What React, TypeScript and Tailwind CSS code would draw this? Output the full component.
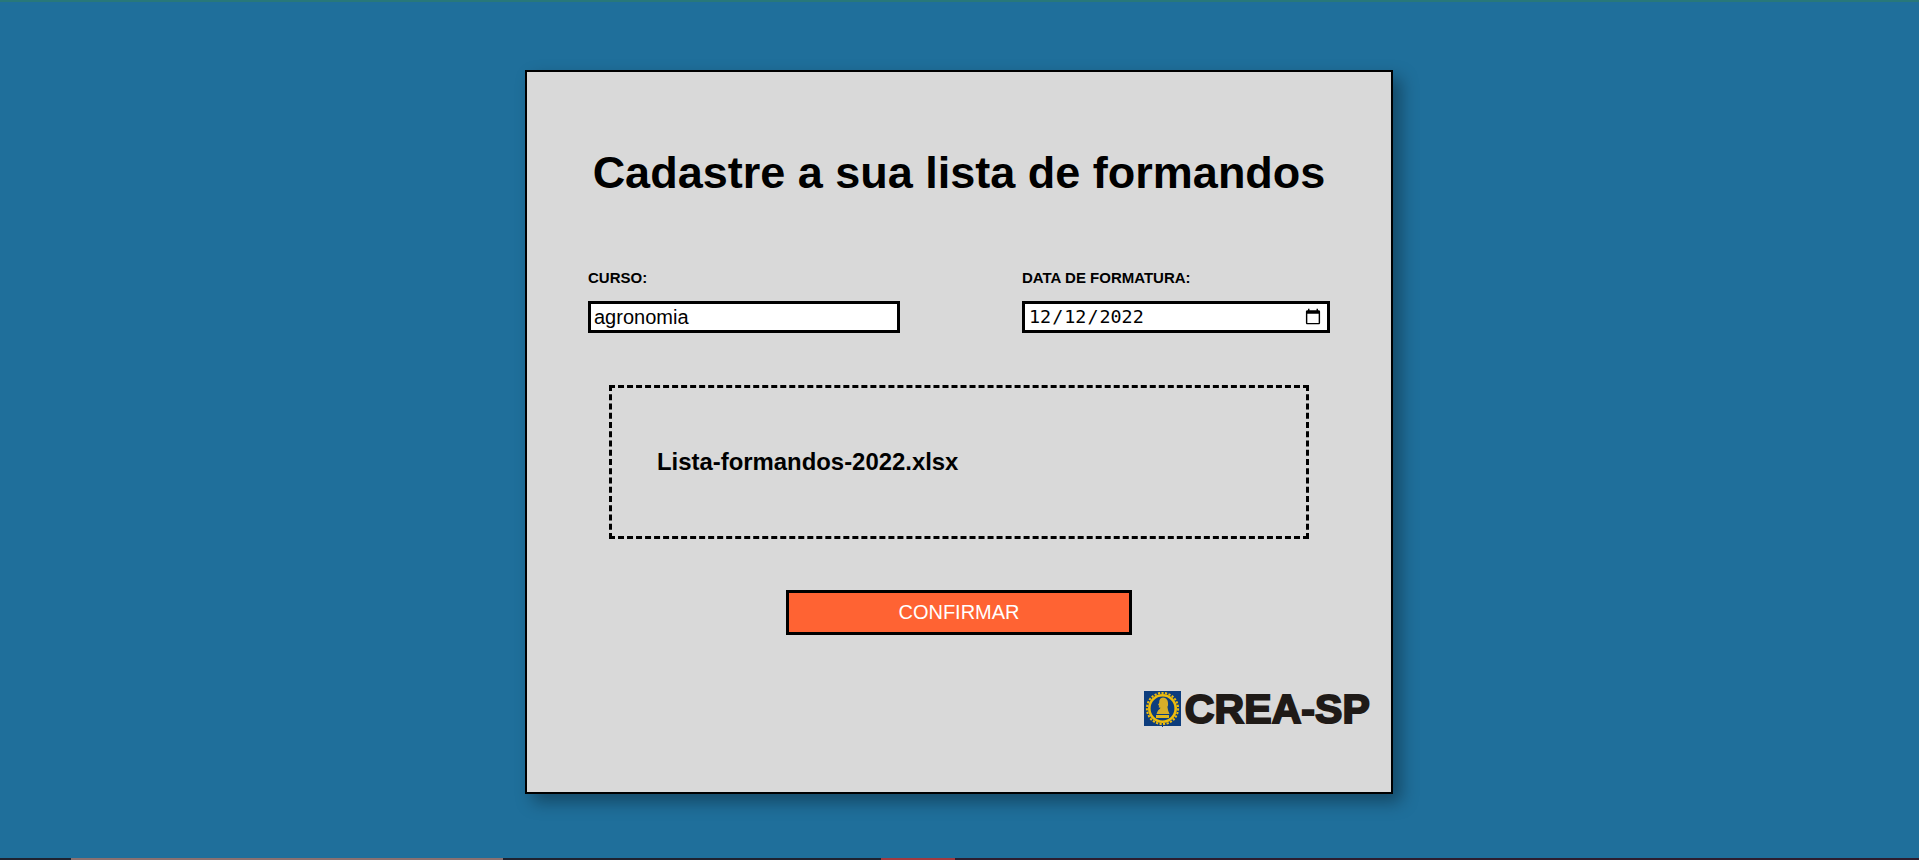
import React from "react";

const CreaEmblem = () => (
  <svg width="37" height="36" viewBox="0 0 37 36" className="shrink-0">
    <rect x="0" y="0" width="37" height="35" fill="#0d3d7d" />
    <circle cx="18.5" cy="17.5" r="15.6" fill="none" stroke="#eebc0c" strokeWidth="2" strokeDasharray="2.2 1.4" />
    <circle cx="18.5" cy="17.5" r="13.2" fill="none" stroke="#eebc0c" strokeWidth="2.6" />
    {/* bust with helmet */}
    <path
      d="M19 6.500c3 .2 5 2.400 5 5.500 0 1.500.3 2.600-.6 3.800l.8 4 1.300 3.200H12.500l1-2.600c.8-1.800 2.500-2.200 3-3.600l-1.800-.3.400-2-1.100-.6 1.200-2.100c-.2-3 1.200-5.100 3.800-5.300z"
      fill="#d8ae28"
    />
    <rect x="12" y="24" width="13" height="3" fill="#e3b81e" />
    <rect x="18" y="35" width="1" height="1" fill="#0d3d7d" />
  </svg>
);

export default function App() {
  return (
    <div className="flex h-[860px] w-full flex-col overflow-hidden bg-[#1f6f9b] font-['Liberation_Sans',Arial,sans-serif] text-black">
      <div className="h-[2px] bg-[#28787a]" />

      <main className="flex flex-1 justify-center pt-[68px]">
        <div className="mr-[1px] flex h-[724px] w-[868px] flex-col border-2 border-black bg-[#d9d9d9] shadow-[8px_8px_16px_rgba(0,0,0,0.35)]">
          <h1 className="mt-[75px] text-center text-[45px] leading-[52px] font-bold">
            Cadastre a sua lista de formandos
          </h1>

          <div className="mt-[71px] flex justify-between px-[61px]">
            <div className="flex w-[312px] flex-col">
              <label className="text-[15px] leading-[16px] font-bold">CURSO:</label>
              <input
                type="text"
                defaultValue="agronomia"
                className="mt-[15px] h-[32px] w-[312px] border-[3px] border-black bg-white px-[3px] text-[20px] outline-none"
              />
            </div>
            <div className="flex w-[308px] flex-col">
              <label className="text-[15px] leading-[16px] font-bold">DATA DE FORMATURA:</label>
              <input
                type="date"
                defaultValue="2022-12-12"
                className="mt-[15px] h-[32px] w-[308px] border-[3px] border-black bg-white px-[3px] font-['DejaVu_Sans_Mono',monospace] text-[18.4px] outline-none"
              />
            </div>
          </div>

          <div className="mr-[82px] ml-[82px] mt-[52px] flex h-[154px] items-center border-[3px] border-dashed border-black pl-[45px]">
            <span className="text-[23.9px] font-bold">Lista-formandos-2022.xlsx</span>
          </div>

          <button className="mx-auto mt-[51px] h-[45px] w-[346px] border-[3px] border-black bg-[#ff6333] pb-[2px] text-[20px] text-white">
            CONFIRMAR
          </button>

          <div className="mt-[55px] flex items-center justify-end gap-[4px] pr-[21px]">
            <CreaEmblem />
            <span className="text-[41px] leading-[38px] font-bold tracking-[0.1px] text-[#1f1a17] [-webkit-text-stroke:2px_#1f1a17]">
              CREA-SP
            </span>
          </div>
        </div>
      </main>

      <div className="flex h-[2px] bg-[#1e2230]">
        <div className="ml-[71px] w-[432px] bg-[#8a7070]" />
        <div className="ml-[378px] w-[74px] bg-[#a23a40]" />
        <div className="flex-1 bg-[#2c1e30]" />
      </div>
    </div>
  );
}
